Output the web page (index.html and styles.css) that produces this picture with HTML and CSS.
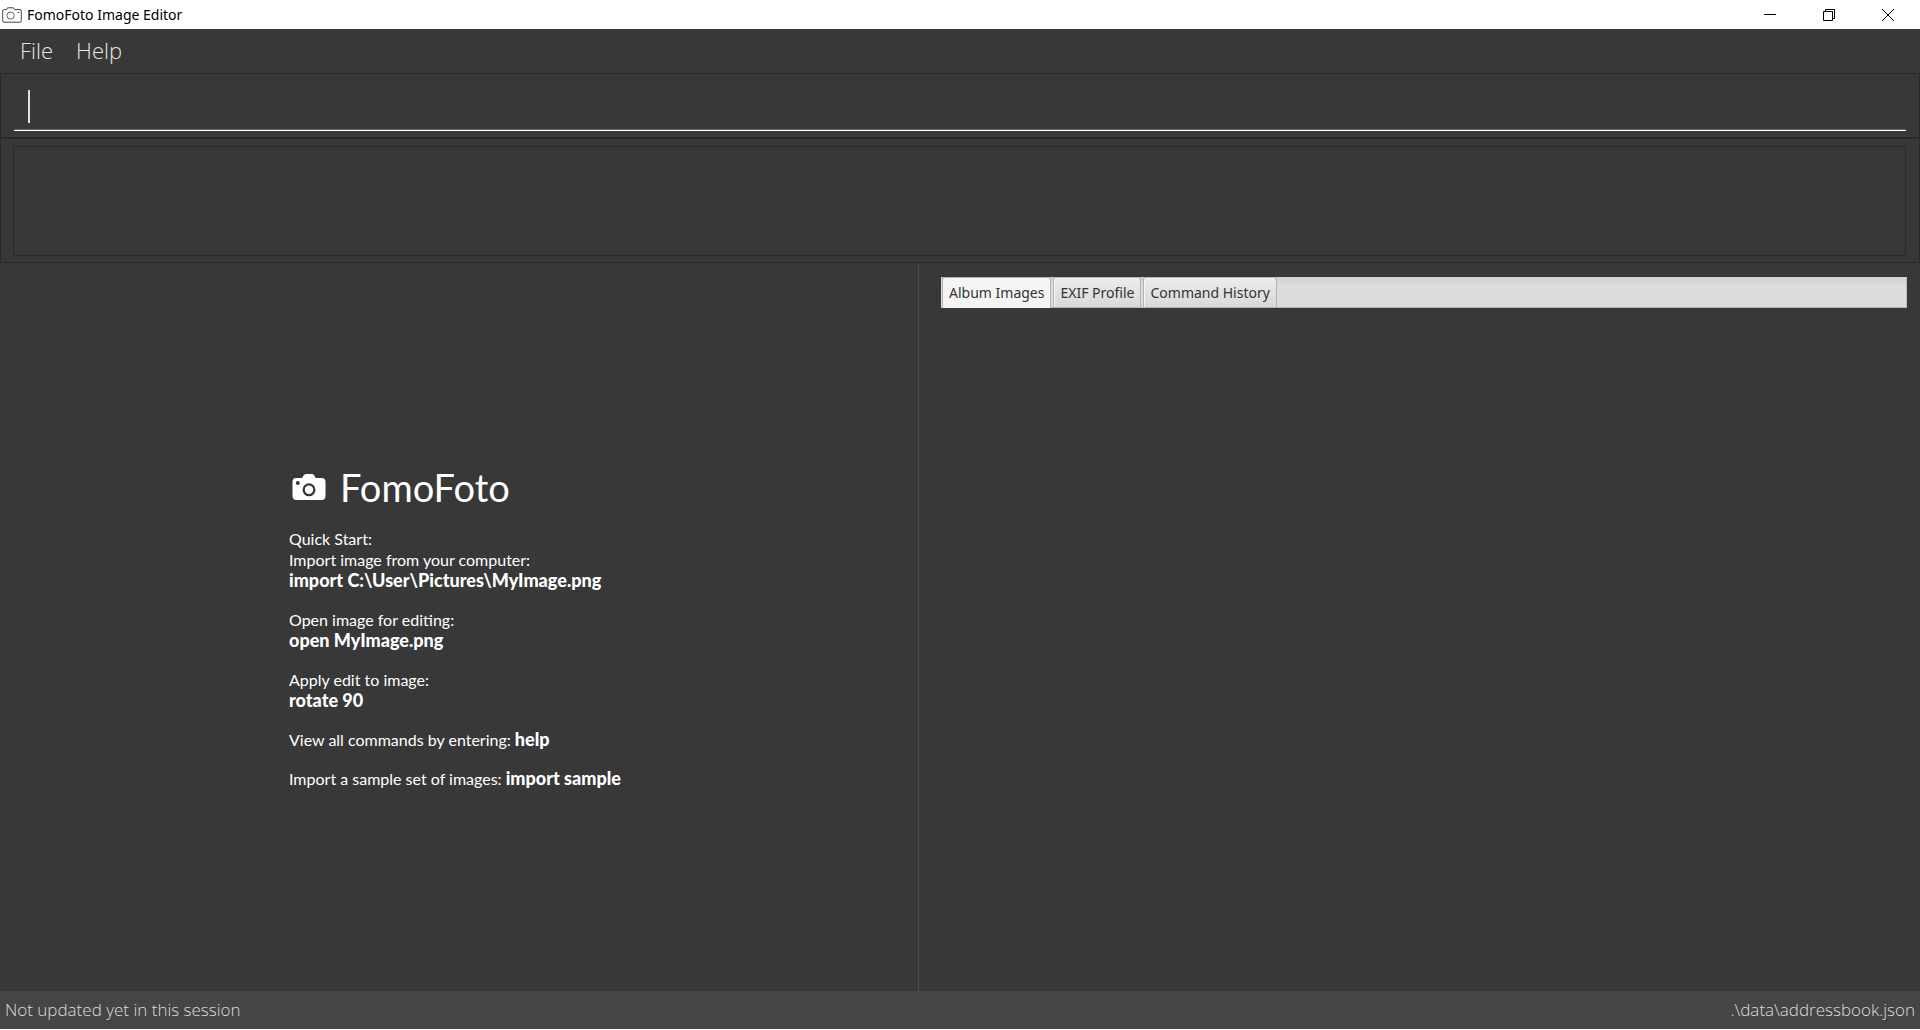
FILE: index.html
```html
<!DOCTYPE html>
<html lang="en">
<head>
<meta charset="utf-8">
<title>FomoFoto Image Editor</title>
<link rel="stylesheet" href="styles.css">
</head>
<body>
<header class="titlebar">
  <svg class="app-icon" width="20" height="16" viewBox="0 0 20 16" fill="none" stroke="#444" aria-hidden="true">
    <path d="M.7 4Q.7 2.600 2.200 2.600H4.600L5.500.800H11.500L12.600 2.600H18Q19.300 2.600 19.300 4V13.800Q19.300 15.200 18 15.200H2Q.7 15.200.7 13.800Z"/>
    <circle cx="8.600" cy="8.600" r="3.600" stroke="#666"/>
    <path d="M15.500 5.500H17.300"/>
  </svg>
  <h1 class="window-title">FomoFoto Image Editor</h1>
  <div class="window-controls">
    <button type="button" class="window-button" aria-label="Minimize"><svg width="12" height="12" viewBox="0 0 12 12"><path d="M0 5.500H12"/></svg></button>
    <button type="button" class="window-button" aria-label="Restore"><svg width="12" height="12" viewBox="0 0 12 12"><path d="M.5 2.500H9.500V11.500H.5ZM2.500 2.500V.5H11.500V9.500H9.500"/></svg></button>
    <button type="button" class="window-button" aria-label="Close"><svg width="12" height="12" viewBox="0 0 12 12"><path d="M0 0L12 12M12 0L0 12"/></svg></button>
  </div>
</header>
<nav class="menubar">
  <button type="button" class="menu-item">File</button>
  <button type="button" class="menu-item">Help</button>
</nav>
<section class="command-pane">
  <div class="command-line">
    <input class="command-input" type="text" aria-label="Command">
    <span class="caret"></span>
  </div>
</section>
<section class="result-pane">
  <output class="result-box" aria-label="Result"></output>
</section>
<main class="workspace">
  <section class="viewer">
    <div class="welcome">
      <h2 class="brand">
        <svg class="brand-icon" width="34" height="26" viewBox="0 0 34 26" aria-hidden="true">
          <path fill="#fff" fill-rule="evenodd" d="M4 4H9.500Q10.500 4 11 2.500Q11.500 0 14 0H20Q22.300 0 22.800 2.500Q23.200 4 24.500 4H29.500Q33.500 4 33.500 8V22Q33.500 26 29.500 26H4.500Q.5 26 .5 22V8Q.5 4 4 4ZM17 9.300A6.500 6.500 0 1 0 17 22.300A6.500 6.500 0 1 0 17 9.300ZM5.800 7A2 2 0 1 0 5.800 11A2 2 0 1 0 5.800 7Z"/>
          <circle cx="17" cy="15.800" r="4.200" fill="#fff"/>
        </svg>
        FomoFoto
      </h2>
      <p class="tip">Quick Start:<br>Import image from your computer:<br><strong>import C:\User\Pictures\MyImage.png</strong></p>
      <p class="tip">Open image for editing:<br><strong>open MyImage.png</strong></p>
      <p class="tip">Apply edit to image:<br><strong>rotate 90</strong></p>
      <p class="tip">View all commands by entering: <strong>help</strong></p>
      <p class="tip">Import a sample set of images: <strong>import sample</strong></p>
    </div>
  </section>
  <section class="details">
    <div class="tabs" role="tablist">
      <button type="button" class="tab tab-selected" role="tab" aria-selected="true">Album Images</button>
      <button type="button" class="tab" role="tab" aria-selected="false">EXIF Profile</button>
      <button type="button" class="tab" role="tab" aria-selected="false">Command History</button>
    </div>
  </section>
</main>
<footer class="statusbar">
  <span>Not updated yet in this session</span>
  <span>.\data\addressbook.json</span>
</footer>
</body>
</html>
```
FILE: styles.css
```css
* {
  box-sizing: border-box;
}

body {
  display: flex;
  flex-direction: column;
  min-height: 100vh;
  margin: 0;
  background: #383838;
  color: #fff;
  font-family: "Open Sans", "Noto Sans", sans-serif;
}

button {
  margin: 0;
  border: 0;
  background: none;
  font-family: inherit;
}

.titlebar {
  display: flex;
  align-items: center;
  height: 29px;
  padding-left: 2px;
  background: #fff;
  color: #000;
}

.app-icon {
  margin-right: 5px;
}

.window-title {
  margin: 0;
  font-family: "Noto Sans", sans-serif;
  font-size: 14px;
  font-weight: 400;
  line-height: 20px;
}

.window-controls {
  display: flex;
  margin-left: auto;
  padding-right: 3px;
}

.window-button {
  display: grid;
  place-items: center;
  width: 59px;
  height: 28px;
  padding: 0;
}

.window-button svg {
  fill: none;
  stroke: #000;
}

.menubar {
  display: flex;
  align-items: center;
  gap: 23px;
  height: 44px;
  padding: 0 20px 2px;
}

.menu-item {
  padding: 0;
  color: #e6e6e6;
  font-size: 22px;
  font-weight: 300;
  line-height: 30px;
}

.command-pane {
  padding: 8px 13px 6px;
  border: 1px solid #292929;
}

.command-line {
  position: relative;
}

.command-input {
  display: block;
  width: 100%;
  height: 49px;
  padding: 0 14px;
  border: 0;
  border-bottom: 1px solid #fff;
  outline: 0;
  background: transparent;
  box-shadow: inset 0 -1px #686868;
  color: #fff;
  font: inherit;
  font-size: 22px;
}

.caret {
  position: absolute;
  top: 8px;
  left: 14px;
  width: 2px;
  height: 33px;
  background: #e0e0e0;
}

.result-pane {
  padding: 7px 13px 6px 12px;
  border: 1px solid #292929;
}

.result-box {
  display: block;
  height: 110px;
  border: 1px solid #292929;
}

.workspace {
  display: grid;
  flex: 1;
  grid-template-columns: 919fr 1001fr;
  padding-top: 1px;
}

.viewer {
  display: grid;
  place-items: center;
  padding-top: 16px;
  border-right: 1px solid #4d4d4d;
}

.welcome {
  width: 340px;
  font-family: Lato, sans-serif;
}

.brand {
  display: flex;
  align-items: center;
  gap: 14px;
  margin: 0 0 18px;
  padding-left: 3px;
  font-size: 38px;
  font-weight: 400;
  line-height: 46px;
}

.tip {
  margin: 0 0 18px;
  font-size: 16px;
  line-height: 21px;
  white-space: nowrap;
}

.tip strong {
  font-size: 18px;
  font-weight: 900;
  line-height: 20px;
}

.details {
  padding: 13px 13px 0 22px;
}

.tabs {
  display: flex;
  gap: 2px;
  height: 31px;
  padding-left: 1px;
  border-right: 1px solid #b8c0be;
  border-bottom: 1px solid #b0b6b4;
  background: linear-gradient(#cfcfcf, #ddd 8px);
}

.tab {
  height: 30px;
  padding: 0 6px;
  border: 1px solid #b3b3b3;
  border-bottom: 0;
  border-radius: 3px 3px 0 0;
  background: linear-gradient(#ececec, #d9d9d9);
  box-shadow: inset 1px 1px #f5f5f5;
  color: #333;
  font-family: "Noto Sans", sans-serif;
  font-size: 14px;
  line-height: 28px;
}

.tab-selected {
  height: 31px;
  background: #f4f4f4;
}

.statusbar {
  display: flex;
  justify-content: space-between;
  align-items: center;
  height: 39px;
  padding: 0 5px;
  border-bottom: 1px solid #fff;
  background: #454545;
  color: #ddd;
  font-size: 17px;
  font-weight: 300;
  line-height: 24px;
}
```
